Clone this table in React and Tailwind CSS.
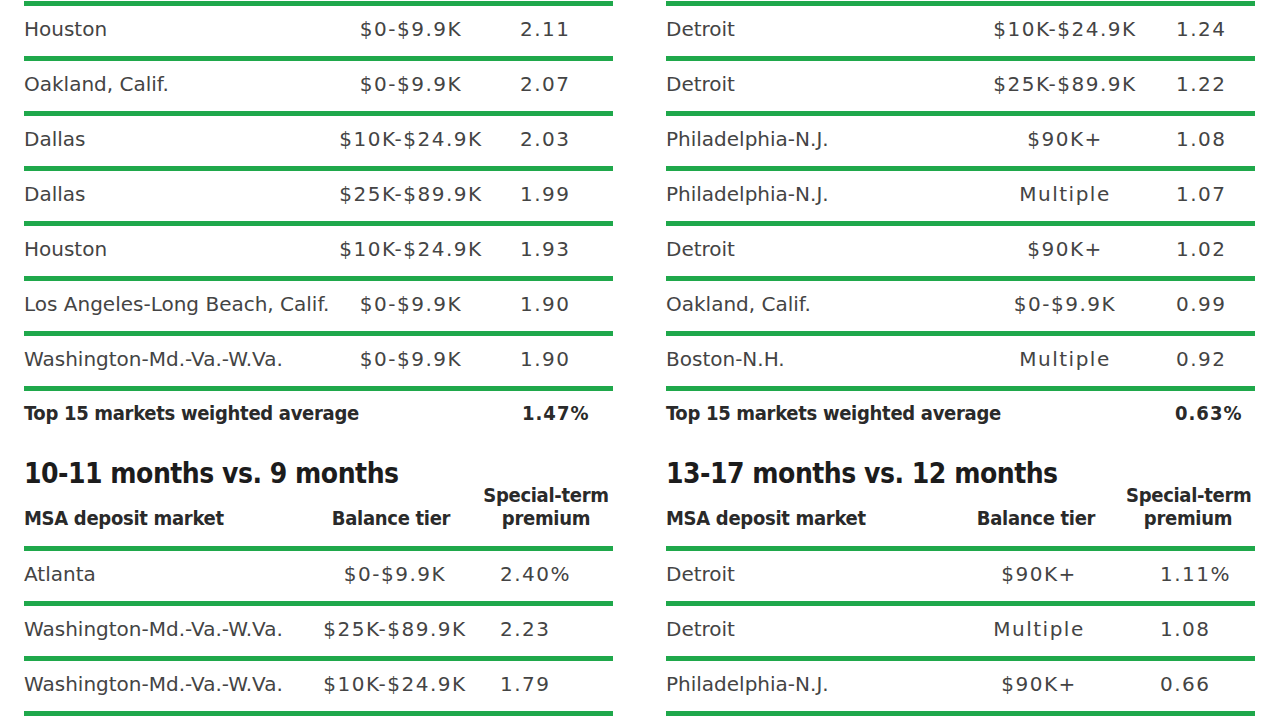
import React from 'react';

const COND = "font-['DejaVu_Sans_Condensed','Liberation_Sans',sans-serif]";
const BODY = "font-['DejaVu_Sans','Liberation_Sans',sans-serif]";

const tables = [
  {
    heading: '10-11 months vs. 9 months',
    average: '1.47%',
    avgPad: 'w-[498px]',
    top: { market: 'w-[297px]', prem: 'pl-[19px]' },
    bottom: { market: 'w-[281px]', prem: 'pl-[15px]' },
    head: { market: 'w-[277px]', prem: 'w-[130px]' },
    upper: [
      ['Houston', '$0-$9.9K', '2.11'],
      ['Oakland, Calif.', '$0-$9.9K', '2.07'],
      ['Dallas', '$10K-$24.9K', '2.03'],
      ['Dallas', '$25K-$89.9K', '1.99'],
      ['Houston', '$10K-$24.9K', '1.93'],
      ['Los Angeles-Long Beach, Calif.', '$0-$9.9K', '1.90'],
      ['Washington-Md.-Va.-W.Va.', '$0-$9.9K', '1.90'],
    ],
    lower: [
      ['Atlanta', '$0-$9.9K', '2.40%'],
      ['Washington-Md.-Va.-W.Va.', '$25K-$89.9K', '2.23'],
      ['Washington-Md.-Va.-W.Va.', '$10K-$24.9K', '1.79'],
    ],
  },
  {
    heading: '13-17 months vs. 12 months',
    average: '0.63%',
    avgPad: 'w-[509px]',
    top: { market: 'w-[309px]', prem: 'pl-[21px]' },
    bottom: { market: 'w-[283px]', prem: 'pl-[31px]' },
    head: { market: 'w-[280px]', prem: 'w-[124px]' },
    upper: [
      ['Detroit', '$10K-$24.9K', '1.24'],
      ['Detroit', '$25K-$89.9K', '1.22'],
      ['Philadelphia-N.J.', '$90K+', '1.08'],
      ['Philadelphia-N.J.', 'Multiple', '1.07'],
      ['Detroit', '$90K+', '1.02'],
      ['Oakland, Calif.', '$0-$9.9K', '0.99'],
      ['Boston-N.H.', 'Multiple', '0.92'],
    ],
    lower: [
      ['Detroit', '$90K+', '1.11%'],
      ['Detroit', 'Multiple', '1.08'],
      ['Philadelphia-N.J.', '$90K+', '0.66'],
    ],
  },
];

const Rule = () => <div className="h-[5px] w-full bg-[#1fa84b]" />;

const Row = ({ row, cols }) => (
  <>
    <Rule />
    <div className={`flex h-[50px] items-center pb-[4px] text-[20px] text-[#444] ${BODY}`}>
      <div className={`${cols.market} shrink-0 whitespace-nowrap`}>{row[0]}</div>
      <div className="w-[180px] shrink-0 text-center tracking-[1.5px] whitespace-nowrap">{row[1]}</div>
      <div className={`${cols.prem} tracking-[1.5px] whitespace-nowrap`}>{row[2]}</div>
    </div>
  </>
);

const Table = ({ t }) => (
  <div className="w-[589px] shrink-0">
    {t.upper.map((r, i) => <Row key={i} row={r} cols={t.top} />)}
    <Rule />
    <div className={`flex h-[44px] items-center text-[20px] font-bold tracking-[-0.3px] text-[#2a2a2a] ${COND}`}>
      <div className={`${t.avgPad} shrink-0 whitespace-nowrap`}>Top 15 markets weighted average</div>
      <div className="tracking-[1px]">{t.average}</div>
    </div>
    <div className={`flex items-end pt-[24px] pb-[16px] text-[#2a2a2a] ${COND}`}>
      <div className={`${t.head.market} shrink-0`}>
        <div className="whitespace-nowrap text-[28px] leading-[30px] font-bold tracking-[-0.5px] text-[#1c1c1c]">{t.heading}</div>
        <div className="mt-[18px] whitespace-nowrap text-[20px] leading-[23px] font-bold tracking-[-0.3px]">MSA deposit market</div>
      </div>
      <div className="w-[180px] shrink-0 whitespace-nowrap text-center text-[20px] leading-[23px] font-bold tracking-[-0.3px]">Balance tier</div>
      <div className={`${t.head.prem} shrink-0 whitespace-nowrap text-center text-[20px] leading-[23px] font-bold tracking-[-0.3px]`}>
        <div>Special-term</div>
        <div>premium</div>
      </div>
    </div>
    {t.lower.map((r, i) => <Row key={i} row={r} cols={t.bottom} />)}
    <Rule />
  </div>
);

export default function App() {
  return (
    <div className="h-[720px] w-[1280px] overflow-hidden bg-white pt-[1px]">
      <div className="flex gap-[53px] pl-[24px]">
        {tables.map((t, i) => <Table key={i} t={t} />)}
      </div>
    </div>
  );
}
